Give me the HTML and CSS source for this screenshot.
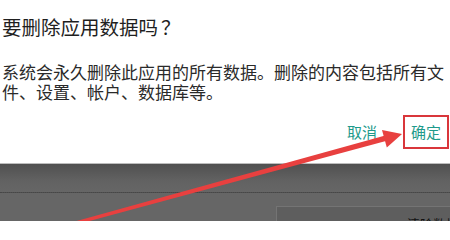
FILE: index.html
```html
<!DOCTYPE html>
<html lang="zh-CN">
<head>
<meta charset="utf-8">
<title>删除应用数据</title>
<link rel="stylesheet" href="styles.css">
</head>
<body>
<div class="page">
  <section class="dialog">
    <h1 class="title">要删除应用数据吗<span class="qmark">？</span></h1>
    <p class="message">系统会永久删除此应用的所有数据。删除的内容包括所有文件、设置、帐户、数据库等。</p>
    <div class="actions">
      <button class="btn">取消</button>
      <button class="btn btn-highlight">确定</button>
    </div>
  </section>
  <section class="backdrop">
    <div class="band"></div>
    <div class="lower">
      <div class="panel"><span class="panel-text">清除数据</span></div>
    </div>
  </section>
  <svg class="arrow" width="450" height="221" viewBox="0 0 450 221" aria-hidden="true">
    <polygon points="72.4,225.6 71.6,222.4 385.2,135.4 386.8,140.8" fill="#e8403f"/>
    <polygon points="402,134 382,130 386.8,147.5" fill="#e8403f"/>
  </svg>
</div>
</body>
</html>
```

FILE: styles.css
```css
* { box-sizing: border-box; }
html, body {
  margin: 0;
  padding: 0;
  background: #ffffff;
}
.page {
  position: relative;
  width: 450px;
  height: 221px;
  overflow: hidden;
  font-family: "Noto Sans CJK SC", "Noto Sans", sans-serif;
}
.dialog {
  padding: 17px 1px 0 2px;
  display: flex;
  flex-direction: column;
}
.title {
  margin: 0;
  font-size: 19.5px;
  line-height: 20px;
  font-weight: 400;
  color: #1f1f1f;
}
.qmark {
  font-family: "Noto Sans CJK TC", "Noto Sans CJK SC", sans-serif;
  margin-left: 3px;
}
.message {
  margin: 25px 0 0 0;
  font-size: 17px;
  line-height: 20px;
  color: #2a2a2a;
}
.actions {
  margin-top: 13px;
  display: flex;
  justify-content: flex-end;
  gap: 18px;
}
.btn {
  font-family: inherit;
  font-size: 15px;
  line-height: 16px;
  padding: 7px 6px;
  border: 2px solid transparent;
  background: transparent;
  color: #1e9a8b;
  margin: 0;
}
.btn-highlight {
  border-color: #d9363b;
}
.backdrop {
  margin-top: 14px;
  height: 58px;
  border-top: 1px solid #bdbdbd;
  background: #666666;
  display: flex;
  flex-direction: column;
  overflow: hidden;
}
.band {
  flex: 0 0 29px;
  background: linear-gradient(#505050, #626262 60%, #666666);
  border-bottom: 1px dotted #474747;
}
.lower {
  flex: 0 0 auto;
  padding: 13px 0 0 276px;
  display: flex;
}
.panel {
  flex: 1;
  height: 40px;
  background: #5e5e5e;
  border-top: 1px solid #747474;
  border-left: 1px solid #747474;
  padding: 10px 0 0 130px;
  overflow: hidden;
}
.panel-text {
  font-size: 13px;
  line-height: 13px;
  color: #111111;
  white-space: nowrap;
  display: block;
}
.arrow {
  position: absolute;
  left: 0;
  top: 0;
}
```
